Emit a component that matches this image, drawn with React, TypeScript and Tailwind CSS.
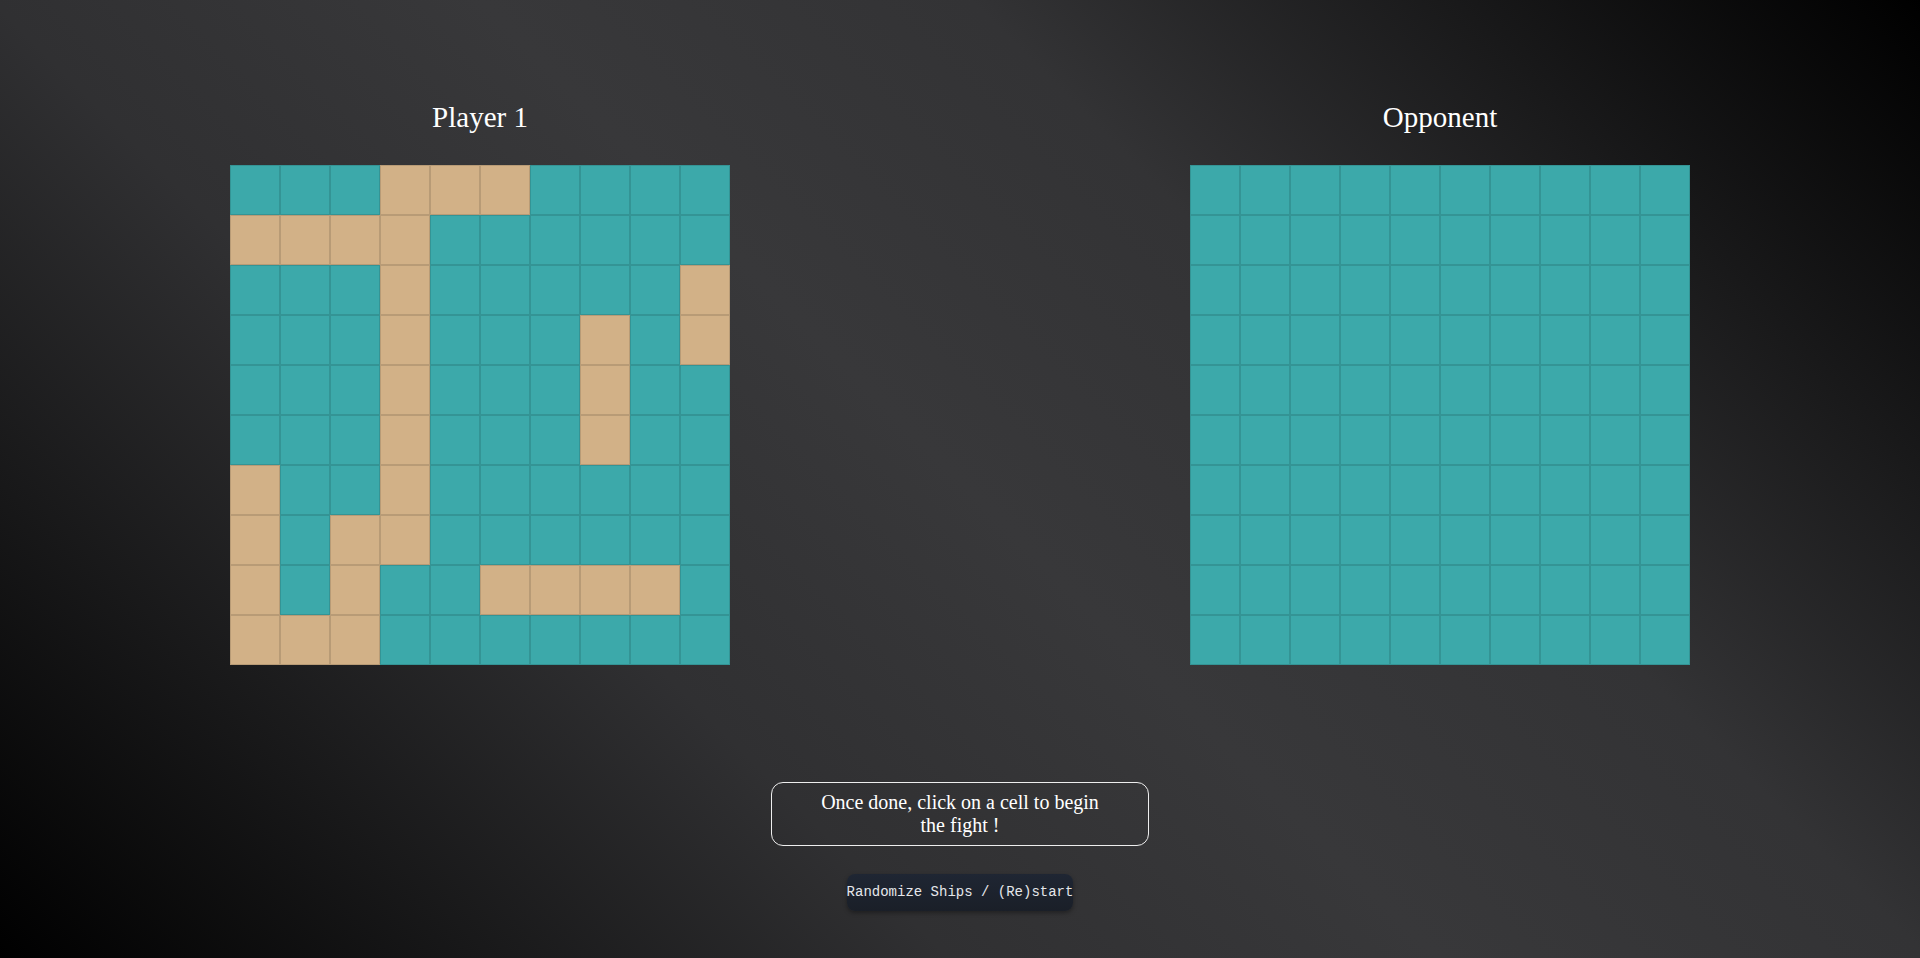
import React from "react";

const ships: [number, number][] = [
  [0, 3], [0, 4], [0, 5],
  [1, 0], [1, 1], [1, 2], [1, 3],
  [2, 3], [2, 9],
  [3, 3], [3, 7], [3, 9],
  [4, 3], [4, 7],
  [5, 3], [5, 7],
  [6, 0], [6, 3],
  [7, 0], [7, 2], [7, 3],
  [8, 0], [8, 2], [8, 5], [8, 6], [8, 7], [8, 8],
  [9, 0], [9, 1], [9, 2],
];

const shipSet = new Set(ships.map(([r, c]) => `${r}-${c}`));

function Board({ showShips }: { showShips: boolean }) {
  const cells = [];
  for (let r = 0; r < 10; r++) {
    for (let c = 0; c < 10; c++) {
      const isShip = showShips && shipSet.has(`${r}-${c}`);
      cells.push(
        <div
          key={`${r}-${c}`}
          className={
            isShip
              ? "w-[50px] h-[50px] border border-[rgba(0,0,0,0.12)] bg-[#d2b187]"
              : "w-[50px] h-[50px] border border-[rgba(0,0,0,0.12)] bg-[#3ca9aa]"
          }
        />
      );
    }
  }
  return <div className="grid grid-cols-[repeat(10,50px)] grid-rows-[repeat(10,50px)] w-[500px] h-[500px]">{cells}</div>;
}

export default function App() {
  return (
    <div
      className="w-full min-h-[958px] flex flex-col items-center bg-[linear-gradient(45deg,#000000_0%,#303032_33%,#38383a_50%,#333335_67%,#000000_100%)] text-white"
      style={{ fontFamily: '"Liberation Serif", "Times New Roman", serif' }}
    >
      <div className="flex w-full pt-[101px]">
        <div className="w-1/2 flex flex-col items-center">
          <h2 className="text-[29px] leading-[32px] font-normal text-white">Player 1</h2>
          <div className="mt-[32px]">
            <Board showShips={true} />
          </div>
        </div>
        <div className="w-1/2 flex flex-col items-center">
          <h2 className="text-[29px] leading-[32px] font-normal text-white">Opponent</h2>
          <div className="mt-[32px]">
            <Board showShips={false} />
          </div>
        </div>
      </div>
      <div className="mt-[117px] w-[378px] h-[64px] border border-[#eeeeee] rounded-[12px] py-[8px] text-center text-[20px] leading-[23px] text-white">
        Once done, click on a cell to begin
        <br />
        the fight !
      </div>
      <button
        className="mt-[28px] w-[226px] h-[37px] rounded-[8px] bg-[linear-gradient(180deg,#1f2633,#1a1f28)] shadow-[0_2px_4px_rgba(0,0,0,0.35)] flex items-center justify-center text-[14px] text-[#e5e7eb] whitespace-nowrap"
        style={{ fontFamily: '"Liberation Mono", "Courier New", monospace' }}
      >
        Randomize Ships / (Re)start
      </button>
    </div>
  );
}
